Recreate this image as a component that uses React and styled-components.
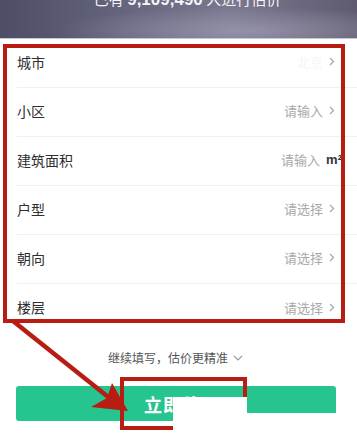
import React from "react";
import styled, { createGlobalStyle } from "styled-components";

const GlobalStyle = createGlobalStyle`
  html, body {
    margin: 0;
    padding: 0;
    background: #fff;
  }
  body {
    font-family: "Noto Sans CJK SC", "Noto Sans", sans-serif;
  }
`;

const rows = [
  { label: "城市", value: "北京", faded: true },
  { label: "小区", value: "请输入" },
  { label: "建筑面积", value: "请输入", unit: true },
  { label: "户型", value: "请选择" },
  { label: "朝向", value: "请选择" },
  { label: "楼层", value: "请选择" },
];

const Chevron = () => (
  <svg width="6" height="9" viewBox="0 0 6 9">
    <path d="M1 1 L4.5 4.5 L1 8" fill="none" stroke="#a8a8a8" strokeWidth="1.3" />
  </svg>
);

const App = () => {
  return (
    <>
      <GlobalStyle />
      <Page>
        <Banner>
          <BannerText>
            已有 <b>9,109,490</b> 人进行估价
          </BannerText>
        </Banner>
        <List>
          {rows.map((r) => (
            <Row key={r.label}>
              <Label>{r.label}</Label>
              <Value $faded={r.faded}>
                {r.value}
                {r.unit ? <Unit>m²</Unit> : <Chevron />}
              </Value>
            </Row>
          ))}
        </List>
        <More>
          继续填写，估价更精准
          <svg width="10" height="6" viewBox="0 0 10 6">
            <path d="M1 1 L5 5 L9 1" fill="none" stroke="#999" strokeWidth="1.1" />
          </svg>
        </More>
        <Submit>立即估价</Submit>

        {/* annotation layer over the screenshot */}
        <Frame $x={3} $y={44} $w={342} $h={279} />
        <Frame $x={120} $y={377} $w={127} $h={53} />
        <Patch $x={173} $y={397} $w={74} $h={48} />
        <Patch $x={247} $y={413} $w={110} $h={32} />
        <Arrow width="357" height="445" viewBox="0 0 357 445">
          <line x1="13" y1="321" x2="112" y2="400" stroke="#b81c12" strokeWidth="4.5" />
          <polygon points="128,411 91,407 107,398 112,383" fill="#b81c12" />
        </Arrow>
      </Page>
    </>
  );
};
export default App;

const Page = styled.div`
  position: relative;
  width: 357px;
  height: 445px;
  overflow: hidden;
  background: #fff;
`;

const Banner = styled.div`
  height: 38px;
  display: flex;
  justify-content: center;
  align-items: flex-start;
  background:
    radial-gradient(ellipse at 70% 80%, rgba(170, 168, 190, 0.55), transparent 55%),
    linear-gradient(90deg, #4e4d66 0%, #66657e 35%, #7a788f 65%, #5f5a70 100%);
  border-bottom: 1px solid #c9c8d2;
`;

const BannerText = styled.div`
  margin-top: -12px;
  color: #f4f4f8;
  font-size: 15px;
  line-height: 22px;
  padding-left: 18px;
  b {
    font-family: "Liberation Sans", Arial, sans-serif;
    font-weight: 700;
    font-size: 17px;
  }
`;

const List = styled.div`
  display: flex;
  flex-direction: column;
`;

const Row = styled.div`
  height: 49px;
  margin-left: 17px;
  padding-right: 22px;
  padding-bottom: 3px;
  display: flex;
  align-items: center;
  justify-content: space-between;
  border-bottom: 1px solid #f1f1f1;
  box-sizing: border-box;
  &:last-child {
    border-bottom: none;
  }
`;

const Label = styled.span`
  font-size: 14px;
  color: #2e2e2e;
`;

const Value = styled.span`
  display: flex;
  align-items: center;
  gap: 6px;
  font-size: 13px;
  color: ${(p) => (p.$faded ? "#f5f5f5" : "#a9a9a9")};
`;

const Unit = styled.span`
  font-family: "Liberation Sans", Arial, sans-serif;
  font-size: 13px;
  font-weight: 700;
  color: #333;
  margin-right: -7px;
`;

const More = styled.div`
  margin-top: 16px;
  display: flex;
  justify-content: center;
  align-items: center;
  gap: 5px;
  font-size: 12px;
  color: #555;
  padding-right: 6px;
`;

const Submit = styled.div`
  margin: 20px 21px 0 16px;
  height: 35px;
  border-radius: 3px;
  background: #26c48f;
  color: #fff;
  font-size: 18px;
  font-weight: 700;
  display: flex;
  justify-content: center;
  align-items: center;
  padding-left: 12px;
  letter-spacing: 1px;
`;

const Frame = styled.div`
  position: absolute;
  left: ${(p) => p.$x}px;
  top: ${(p) => p.$y}px;
  width: ${(p) => p.$w}px;
  height: ${(p) => p.$h}px;
  box-sizing: border-box;
  border: 4px solid #b81c12;
`;

const Patch = styled.div`
  position: absolute;
  left: ${(p) => p.$x}px;
  top: ${(p) => p.$y}px;
  width: ${(p) => p.$w}px;
  height: ${(p) => p.$h}px;
  background: #fff;
`;

const Arrow = styled.svg`
  position: absolute;
  left: 0;
  top: 0;
  pointer-events: none;
`;
